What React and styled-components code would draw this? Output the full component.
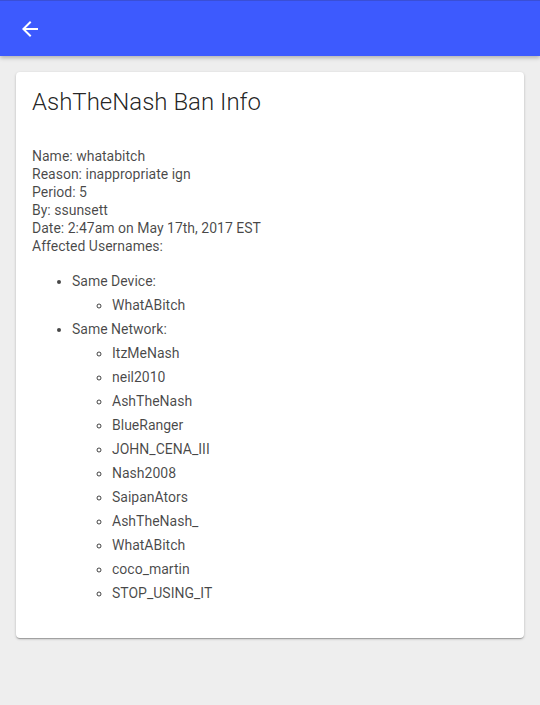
import React from 'react';
import styled, { createGlobalStyle } from 'styled-components';

const GlobalStyle = createGlobalStyle`
  body {
    margin: 0;
    background: #eeeeee;
    font-family: Roboto, "Noto Sans", sans-serif;
  }
`;

const Page = styled.div`
  min-height: 705px;
  background: #eeeeee;
`;

const TopBar = styled.header`
  height: 56px;
  box-sizing: border-box;
  display: flex;
  align-items: center;
  padding: 0 18px;
  background: #3d5afe;
  border-top: 1px solid #3a4fd6;
  box-shadow: 0 2px 4px rgba(0, 0, 0, 0.25);
`;

const BackButton = styled.button`
  display: flex;
  align-items: center;
  justify-content: center;
  width: 24px;
  height: 24px;
  padding: 0;
  border: none;
  background: none;
  cursor: pointer;
`;

const Main = styled.main`
  padding: 16px;
`;

const Card = styled.section`
  background: #fff;
  border-radius: 4px;
  padding: 16px 16px 19px;
  box-shadow: 0 1px 3px rgba(0, 0, 0, 0.2), 0 1px 1px rgba(0, 0, 0, 0.14),
    0 2px 1px -1px rgba(0, 0, 0, 0.12);
  color: rgba(0, 0, 0, 0.72);
`;

const Title = styled.h1`
  margin: 0 0 31px;
  font-size: 24px;
  font-weight: 300;
  line-height: 28px;
  color: rgba(0, 0, 0, 0.87);
`;

const Info = styled.div`
  font-size: 14px;
  line-height: 18px;
`;

const List = styled.ul`
  margin: ${p => (p.nested ? '0' : '14px 0')};
  padding-left: 40px;
  font-size: 14px;
  line-height: 24px;
  list-style-type: ${p => (p.nested ? 'circle' : 'disc')};
`;

const ArrowBack = () => (
  <svg width="24" height="24" viewBox="0 0 24 24" fill="#fff">
    <path d="M20 11H7.83l5.59-5.59L12 4l-8 8 8 8 1.41-1.41L7.83 13H20v-2z" />
  </svg>
);

const sameDevice = ['WhatABitch'];
const sameNetwork = [
  'ItzMeNash',
  'neil2010',
  'AshTheNash',
  'BlueRanger',
  'JOHN_CENA_III',
  'Nash2008',
  'SaipanAtors',
  'AshTheNash_',
  'WhatABitch',
  'coco_martin',
  'STOP_USING_IT',
];

const App = () => {
  return (
    <Page>
      <GlobalStyle />
      <TopBar>
        <BackButton aria-label="back">
          <ArrowBack />
        </BackButton>
      </TopBar>
      <Main>
        <Card>
          <Title>AshTheNash Ban Info</Title>
          <Info>
            <div>Name: whatabitch</div>
            <div>Reason: inappropriate ign</div>
            <div>Period: 5</div>
            <div>By: ssunsett</div>
            <div>Date: 2:47am on May 17th, 2017 EST</div>
            <div>Affected Usernames:</div>
          </Info>
          <List>
            <li>
              Same Device:
              <List nested>
                {sameDevice.map((n, i) => (
                  <li key={i}>{n}</li>
                ))}
              </List>
            </li>
            <li>
              Same Network:
              <List nested>
                {sameNetwork.map((n, i) => (
                  <li key={i}>{n}</li>
                ))}
              </List>
            </li>
          </List>
        </Card>
      </Main>
    </Page>
  );
};

export default App;
